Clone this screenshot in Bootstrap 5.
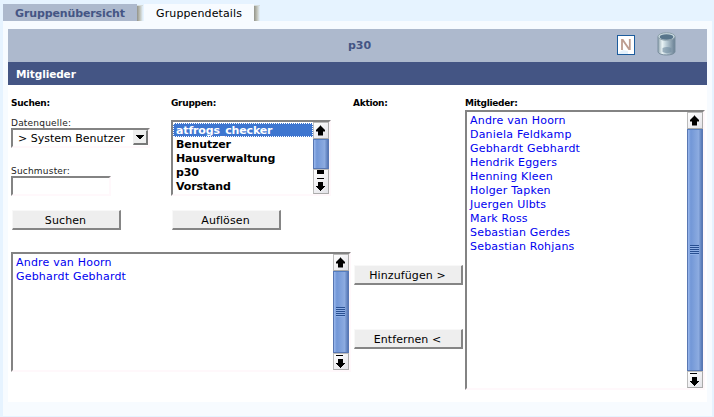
<!DOCTYPE html>
<html lang="de">
<head>
<meta charset="utf-8">
<title>Gruppendetails</title>
<link href="https://cdn.jsdelivr.net/npm/bootstrap@5.3.0/dist/css/bootstrap.min.css" rel="stylesheet">
<style>
body{background:#e6f3ff;font:11px/14px "DejaVu Sans",Verdana,sans-serif;color:#000;width:714px;height:417px;overflow:hidden;padding:4px 2px 0 3px}
.tabs{height:17px;line-height:20px}
.tab-a{width:134px;padding-left:12px;background:#adb9cd;color:#445584;font-weight:700;letter-spacing:-.12px}
.tab-b{width:110px;padding-left:12px;background:#f7fbff;letter-spacing:.12px}
.shade{width:7px;padding-top:1px}
.shade::before{content:"";display:block;width:6px;height:16px;background:linear-gradient(90deg,#92938a,#c0c2b8 50%,#e6f3ff);border-top:1px solid #d5dcdc}
.frame{background:#f7fbff;height:395px;padding:8px 5px 14px}
.sheet{background:#fff;height:373px}
.titlebar{height:33px;background:#adb9cd;color:#445584;font-weight:700;padding-left:4px}
.tools{right:31px;top:3px;gap:22px}
.section{height:23px;line-height:25px;background:#445584;color:#fff;font-weight:700;font-size:10.5px;letter-spacing:-.1px;padding-left:8px}
.content{padding:11px 0 0 3px}
.cap{font-size:9px;line-height:14px;font-weight:700;height:14px;letter-spacing:-.28px}
.lab{font-size:9px;line-height:12px;height:12px;color:#222;letter-spacing:.2px}
.left{width:342px}.mid{width:112px}.find{width:160px}
.inset{border:2px solid;border-color:#838383 #fff8fb #fff8fb #838383;background:#fff}
.who{color:#0000f0;letter-spacing:.2px}
.names{padding:2px 0 0 3px;white-space:nowrap}
.groups{letter-spacing:-.15px;padding-top:1px;height:72px;line-height:14px}
.push{appearance:none;display:block;width:109px;height:20px;padding:2px 1px 0 0;border:1px solid #fff;border-width:1px 2px 2px 1px;border-color:#f8f8f8 #858585 #858585 #f8f8f8;background:#eee;line-height:15px;text-align:center;color:#000;letter-spacing:.1px}
.combo{width:139px;height:20px;line-height:17px;padding-left:5px;margin-top:-1px}
.arrow{width:15px;height:15px;background:#eee;border:1px solid;border-color:#eee #777 #777 #eee;border-right-width:2px;border-bottom-width:2px;margin:0 0 0 auto}
.field{width:100px;height:20px}
.scroll{width:16px;background:#eee;flex:none}
.scroll .end{display:block;width:16px;background:linear-gradient(135deg,#fff,#e3e3e8);border:1px solid #bbb;border-right-color:#aaa;border-bottom-color:#aaa;flex:none}
.scroll svg{display:block;margin-left:-1px}
.thumb{border:1px solid #5877b2;border-top-color:#547dc0;background:linear-gradient(90deg,#9bb9ee,#7297d7 20%,#8cabe0 75%,#5577b5)}
.grip{width:9px;height:10px;margin-right:1px;background:repeating-linear-gradient(#284f91 0 1px,#8fb0e7 1px 2px)}
.picked{background:#3e76d0;color:#fff;outline:1px dotted #fff;outline-offset:-1px;margin-left:-3px;padding-left:3px;height:14px;line-height:15px;margin-bottom:1px}
</style>
<script src="https://cdn.jsdelivr.net/npm/bootstrap@5.3.0/dist/js/bootstrap.bundle.min.js"></script>
</head>
<body>
<svg width="0" height="0" class="d-none">
<symbol id="up" viewBox="0 0 14 14"><path d="M7 2h1v1h1v1h1v1h1v1h1v2h-2v4H5V8H3V6h1V5h1V4h1V3h1z" fill="#000"/></symbol>
<symbol id="down" viewBox="0 0 14 16"><path d="M3 1h7v1H3zM5 5h5v4h2v1h-1v1h-1v1H9v1H8v1H7v-1H6v-1H5v-1H4v-1H3V9h2z" fill="#000"/></symbol>
</svg>
<nav class="tabs d-flex">
<div class="tab-a">Gruppenübersicht</div><div class="shade"></div>
<div class="tab-b">Gruppendetails</div><div class="shade"></div>
</nav>
<main class="frame"><div class="sheet">
<header class="titlebar position-relative d-flex align-items-center justify-content-center">p30
<div class="tools position-absolute d-flex align-items-center">
<svg style="margin-top:2px" width="18" height="20" viewBox="0 0 18 20"><rect x=".5" y=".5" width="17" height="19" fill="#fff" stroke="#1c5c9d"/><path d="M1 18l5-3 5 1v3H1z" fill="#e5f2fc"/><path d="M5 15V5h.8L12 14h.8V4" fill="none" stroke="#bd9d90" stroke-width="1.8"/></svg>
<svg width="19" height="24" viewBox="0 0 19 24"><defs><linearGradient id="can"><stop stop-color="#8fa3ae"/><stop offset=".25" stop-color="#e9f3f5"/><stop offset=".5" stop-color="#b9cbd5"/><stop offset="1" stop-color="#687f93"/></linearGradient></defs><path d="M1 4.500V20c1 4 16 4 17 0V4.500z" fill="url(#can)" stroke="#7b8f9f"/><path d="M5.500 16c3-1.500 6-1.500 9 0v4c-3 1.500-6 1.500-9 0z" fill="#748fa3" opacity=".65"/><ellipse cx="9.5" cy="4.5" rx="8.5" ry="3.8" fill="#c9d9df" stroke="#8fa2ad"/><ellipse cx="9.5" cy="5" rx="6.8" ry="2.7" fill="#58758b"/></svg>
</div></header>
<div class="section">Mitglieder</div>
<div class="content d-flex align-items-start">
<div class="left">
<div class="d-flex align-items-start" style="height:156px">
<div class="find">
<div class="cap">Suchen:</div>
<div class="lab" style="margin-top:7px">Datenquelle:</div>
<div class="combo inset d-flex">&gt; System Benutzer<span class="arrow"><svg width="12" height="12" viewBox="0 0 12 12" class="d-block"><path d="M2 4h8v1H9v1H8v1H7v1H5V7H4V6H3V5H2z"/></svg></span></div>
<div class="lab" style="margin-top:17px">Suchmuster:</div>
<div class="field inset" style="margin-top:-1px"></div>
<button class="push" style="margin:14px 0 0 1px">Suchen</button>
</div>
<div>
<div class="cap">Gruppen:</div>
<div class="inset d-flex" style="width:160px;height:76px;margin-top:10px">
<div class="names groups fw-bold flex-grow-1"><div class="picked">atfrogs_checker</div>Benutzer<br>Hausverwaltung<br>p30<br>Vorstand</div>
<div class="scroll d-flex flex-column"><span class="end"><svg width="14" height="15"><use href="#up"/></svg></span><div class="thumb" style="height:30px"></div><span class="end flex-grow-1"><svg width="14" height="23" viewBox="0 0 14 23"><path d="M4 0h7v4H4zM4 8h7v1H4zM5 12h5v4h2v1h-1v1h-1v1H9v1H8v1H7v-1H6v-1H5v-1H4v-1H3v-1h2z"/></svg></span></div>
</div>
<button class="push" style="margin:14px 0 0 1px">Auflösen</button>
</div>
</div>
<div class="inset d-flex" style="width:340px;height:120px">
<div class="names who flex-grow-1">Andre van Hoorn<br>Gebhardt Gebhardt</div>
<div class="scroll d-flex flex-column"><span class="end"><svg width="14" height="15"><use href="#up"/></svg></span><div class="thumb flex-grow-1 d-flex align-items-center justify-content-center"><i class="grip"></i></div><span class="end"><svg width="14" height="15" viewBox="0 0 14 15"><use href="#down" width="14" height="16"/></svg></span></div>
</div>
</div>
<div class="mid"><div class="cap">Aktion:</div>
<button class="push" style="margin:155px 0 0 1px">Hinzufügen &gt;</button>
<button class="push" style="margin:44px 0 0 1px">Entfernen &lt;</button></div>
<div><div class="cap">Mitglieder:</div>
<div class="inset d-flex" style="width:240px;height:280px">
<div class="names who flex-grow-1">Andre van Hoorn<br>Daniela Feldkamp<br>Gebhardt Gebhardt<br>Hendrik Eggers<br>Henning Kleen<br>Holger Tapken<br>Juergen Ulbts<br>Mark Ross<br>Sebastian Gerdes<br>Sebastian Rohjans</div>
<div class="scroll d-flex flex-column"><span class="end"><svg width="14" height="15"><use href="#up"/></svg></span><div class="thumb flex-grow-1 d-flex align-items-center justify-content-center"><i class="grip"></i></div><span class="end"><svg width="14" height="15" viewBox="0 0 14 15"><use href="#down" width="14" height="16"/></svg></span></div>
</div></div>
</div>
</div></main>
</body>
</html>
